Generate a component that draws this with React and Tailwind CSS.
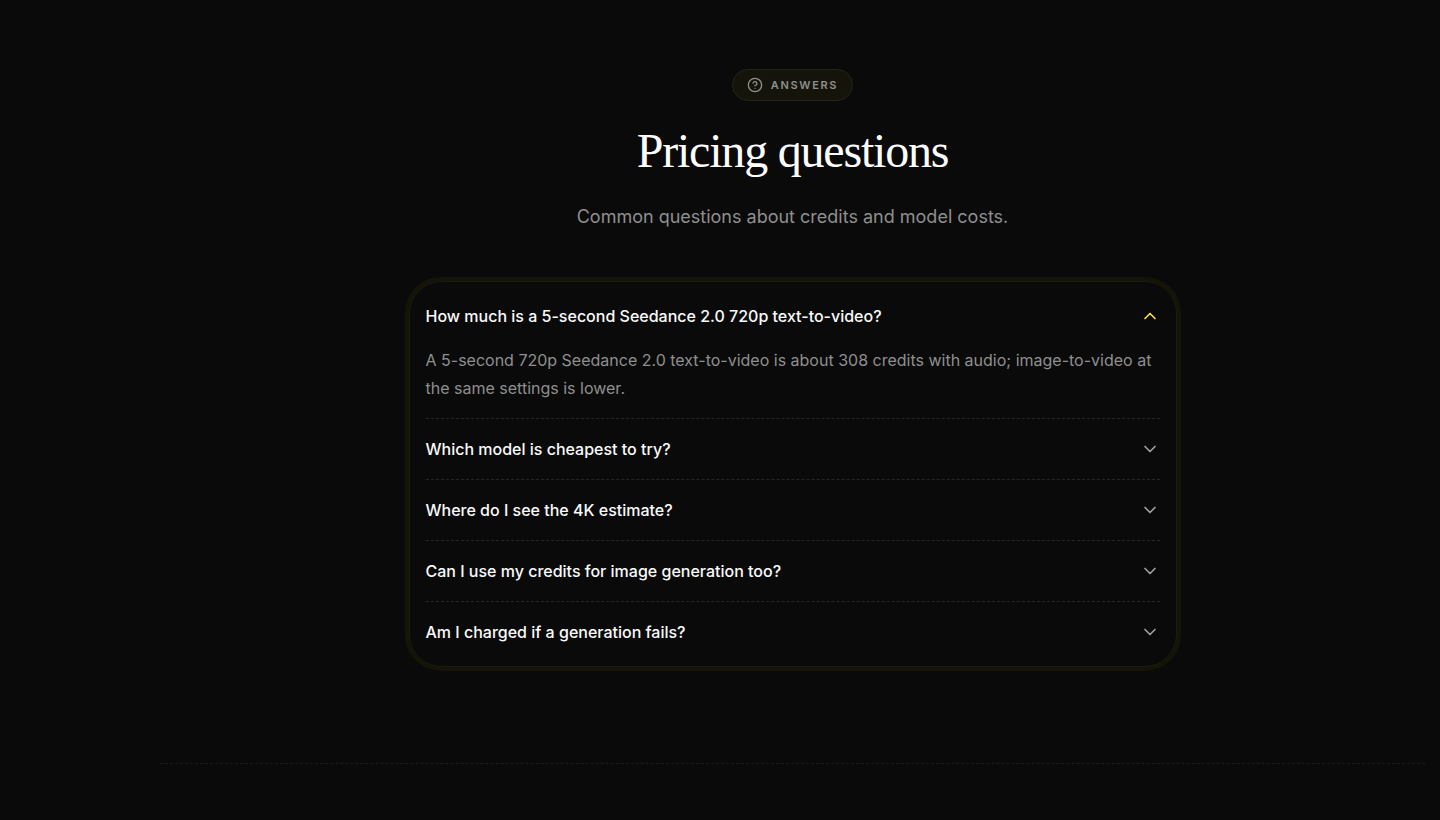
import { useState } from 'react';
import { ChevronDown, CircleQuestionMark } from 'lucide-react';
import clsx from 'clsx';

const faqs = [
  {
    question: 'How much is a 5-second Seedance 2.0 720p text-to-video?',
    answer:
      'A 5-second 720p Seedance 2.0 text-to-video is about 308 credits with audio; image-to-video at the same settings is lower.',
  },
  {
    question: 'Which model is cheapest to try?',
    answer: 'Shorter clips at a lower resolution use the fewest credits.',
  },
  {
    question: 'Where do I see the 4K estimate?',
    answer: 'The estimate is shown next to the generate button.',
  },
  {
    question: 'Can I use my credits for image generation too?',
    answer: 'Yes, credits work for both images and video.',
  },
  {
    question: 'Am I charged if a generation fails?',
    answer: 'No, credits for failed generations are returned.',
  },
];

const FaqItem = ({ id, question, answer, open, onToggle }) => (
  <div className="border-b border-dashed border-[#262626] last:border-b-0">
    <h3>
      <button
        type="button"
        aria-expanded={open}
        aria-controls={id}
        onClick={onToggle}
        className="flex h-15 w-full cursor-pointer items-center justify-between gap-4 text-left text-base font-medium text-[#fafafa]"
      >
        {question}
        <ChevronDown
          className={clsx(
            'h-5 w-5 shrink-0 transition-transform',
            open ? 'rotate-180 text-[#fde047]' : 'text-[#a1a1a1]'
          )}
        />
      </button>
    </h3>
    {open && (
      <p id={id} className="pb-4 text-base leading-7 text-[#8f8f8f]">
        {answer}
      </p>
    )}
  </div>
);

const App = () => {
  const [openIndex, setOpenIndex] = useState(0);

  return (
    <div className="min-h-screen bg-[#0a0a0a] pr-[15px] pl-40 font-['Inter',sans-serif]">
      <section className="flex flex-col items-center border-b border-dashed border-[#1c1c1c] pt-[69px] pb-24">
        <div className="flex h-8 items-center gap-2 rounded-full border border-[#25241a] bg-[#15140a] px-3.5 text-[#8f8f8f]">
          <CircleQuestionMark className="h-4 w-4" />
          <span className="text-[11px] leading-[15px] font-semibold tracking-[0.15em] uppercase">Answers</span>
        </div>

        <h2 className="mt-6 font-['Liberation_Serif',serif] text-5xl leading-[52px] tracking-tight text-white">
          Pricing questions
        </h2>
        <p className="mt-[26px] text-lg leading-7 text-[#8f8f8f]">
          Common questions about credits and model costs.
        </p>

        <div className="mt-[50px] w-full max-w-3xl rounded-4xl border border-[#1e1d0c] px-4 py-1 ring-4 ring-[#141408]">
          {faqs.map((faq, index) => (
            <FaqItem
              key={faq.question}
              id={`faq-${index}`}
              question={faq.question}
              answer={faq.answer}
              open={openIndex === index}
              onToggle={() => setOpenIndex(openIndex === index ? -1 : index)}
            />
          ))}
        </div>
      </section>
    </div>
  );
};

export default App;
